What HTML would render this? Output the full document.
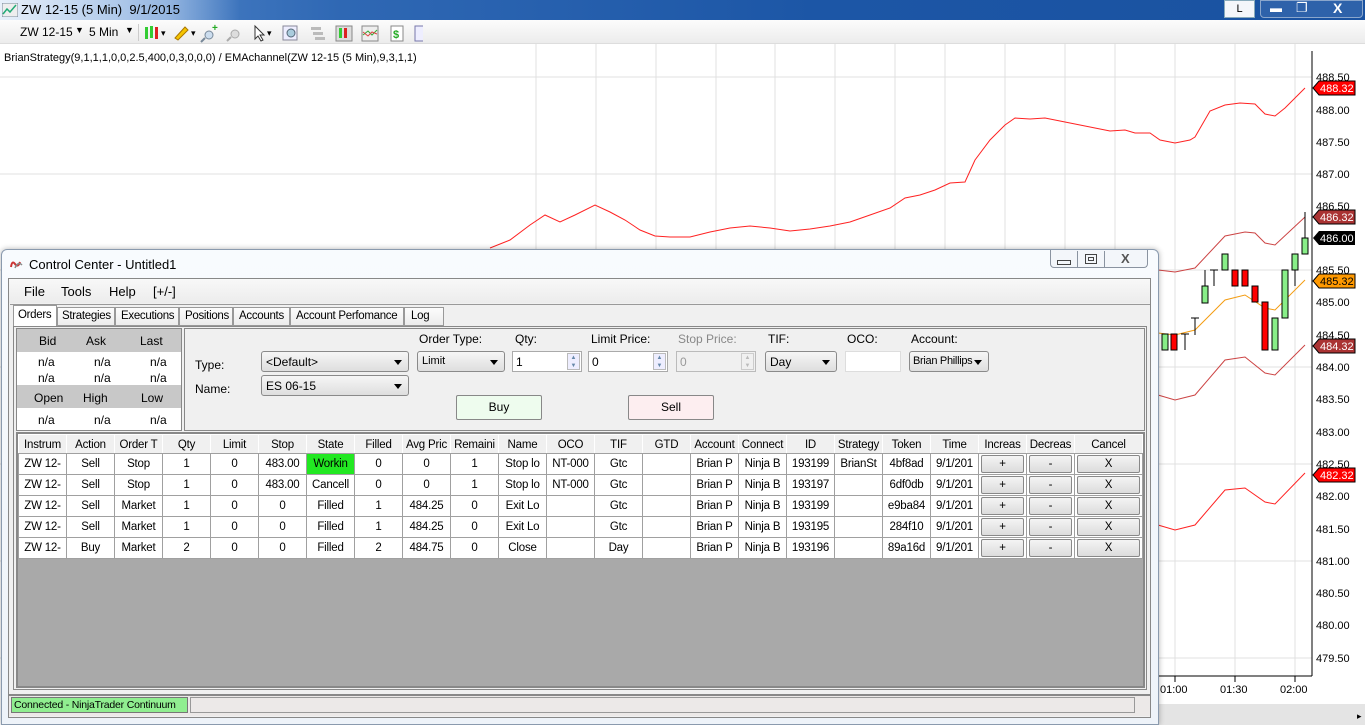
<!DOCTYPE html>
<html><head><meta charset="utf-8"><style>
*{margin:0;padding:0;box-sizing:border-box}
body{width:1365px;height:725px;overflow:hidden;background:#fff;font-family:"Liberation Sans",sans-serif;font-size:12px;color:#000;position:relative}
.abs{position:absolute}
.t{position:absolute;white-space:nowrap}
.tb{background:linear-gradient(#fcfcfc,#ececec)}
.btn{position:absolute;border:1px solid #888;border-radius:2px;background:linear-gradient(#f4f4f4,#dcdcdc)}
.dd{position:absolute;border:1px solid #8a8a8a;border-radius:3px;background:linear-gradient(#f6f6f6,#dedede);font-size:12px;padding:3px 4px;height:21px;white-space:nowrap}
.dd:after{content:"";position:absolute;right:6px;top:8px;border:4px solid transparent;border-top:5px solid #000}
.inp{position:absolute;border:1px solid #aaa;background:#fff;height:21px;font-size:12px;padding:3px 3px}
table{border-collapse:collapse;table-layout:fixed}
td{border:1px solid #a0a0a0;height:21px;text-align:center;font-size:11.5px;letter-spacing:-0.2px;overflow:hidden;white-space:nowrap;padding:0}
td .btn{position:relative;height:18px;margin:0 2px;line-height:16px}
.g td{border-color:#fff}
.tab{position:absolute;top:310px;font-size:11.5px;letter-spacing:-0.3px}
</style></head><body>
<div class="abs" style="left:0;top:0;width:1365px;height:20px;background:linear-gradient(90deg,#5b8fd0 0,#2f68b4 25%,#1c56a6 60%,#1a52a0)"></div>
<div class="abs" style="left:0;top:0;width:240px;height:20px;background:linear-gradient(90deg,#e8f0fa,rgba(200,220,245,.6) 70%,rgba(200,220,245,0))"></div>
<svg class="abs" style="left:2px;top:3px" width="16" height="14"><rect x="0" y="0" width="16" height="14" fill="#eee" stroke="#789"/><polyline points="1,11 5,6 8,9 14,2" fill="none" stroke="#2a7" stroke-width="1.5"/></svg>
<div class="t" style="left:21px;top:2px;font-size:13px">ZW 12-15 (5 Min)&nbsp; 9/1/2015</div>
<div class="abs" style="left:1224px;top:0;width:31px;height:18px;background:#f4f6fa;border:1px solid #8ab;text-align:center;font-size:11px;line-height:16px">L</div>
<div class="abs" style="left:1260px;top:0;width:103px;height:18px;border:1px solid #8aa6cc;border-radius:0 0 4px 4px;background:#2e62aa"></div>
<div class="t" style="left:1270px;top:1px;color:#fff;font-weight:bold">▬</div>
<div class="t" style="left:1296px;top:0;color:#fff;font-size:13px">❐</div>
<div class="t" style="left:1333px;top:0;color:#fff;font-weight:bold;font-size:14px">X</div>
<div class="abs tb" style="left:0;top:20px;width:1365px;height:24px;border-bottom:1px solid #ddd"></div>
<div class="t" style="left:20px;top:25px;font-size:12px">ZW 12-15</div>
<div class="t" style="left:75px;top:25px;font-size:9px">▼</div>
<div class="t" style="left:89px;top:25px;font-size:12px">5 Min</div>
<div class="t" style="left:125px;top:25px;font-size:9px">▼</div>
<div class="abs" style="left:138px;top:24px;width:1px;height:17px;background:#ccc"></div>
<svg class="abs" style="left:143px;top:23px" width="280" height="20">
<rect x="2" y="4" width="3" height="12" fill="#3c3"/><rect x="7" y="3" width="3" height="12" fill="#3c3"/><rect x="12" y="4" width="3" height="12" fill="#d22"/><text x="18" y="13" font-size="9">▾</text>
<path d="M32 15 L42 4 L45 7 L35 17 Z" fill="#f5c400" stroke="#a70"/><text x="48" y="13" font-size="9">▾</text>
<circle cx="66" cy="12" r="4" fill="#cde" stroke="#789"/><path d="M62 15 L58 19" stroke="#789" stroke-width="2"/><text x="69" y="8" font-size="10" fill="#2a2" font-weight="bold">+</text>
<circle cx="92" cy="11" r="4" fill="#ddd" stroke="#aaa"/><path d="M88 14 L84 18" stroke="#aaa" stroke-width="2"/>
<path d="M112 3 L112 16 L115 13 L118 18 L120 17 L117 12 L121 12 Z" fill="#fff" stroke="#333"/><text x="124" y="13" font-size="9">▾</text>
<rect x="140" y="3" width="14" height="14" fill="#eef" stroke="#889"/><circle cx="148" cy="10" r="4" fill="#acd" stroke="#567"/>
<rect x="168" y="4" width="10" height="3" fill="#bbb"/><rect x="170" y="9" width="10" height="3" fill="#bbb"/><rect x="172" y="14" width="10" height="3" fill="#bbb"/>
<rect x="193" y="3" width="16" height="15" fill="#ddd" stroke="#888"/><rect x="196" y="5" width="3" height="10" fill="#3c3"/><rect x="201" y="5" width="3" height="10" fill="#d22"/>
<rect x="219" y="3" width="16" height="15" fill="#eee" stroke="#888"/><polyline points="220,12 225,8 229,12 234,7" fill="none" stroke="#3a3"/><polyline points="220,9 225,13 229,9 234,11" fill="none" stroke="#d44"/>
<rect x="248" y="3" width="12" height="15" fill="#fff" stroke="#888"/><text x="250" y="15" font-size="11" fill="#2a2" font-weight="bold">$</text>
<rect x="272" y="3" width="12" height="15" fill="#eef" stroke="#77a"/>
</svg>
<div class="t" style="left:4px;top:52px;font-size:11px">BrianStrategy(9,1,1,1,0,0,2.5,400,0,3,0,0,0) / EMAchannel(ZW 12-15 (5 Min),9,3,1,1)</div>
<svg class="abs" style="left:0;top:44px" width="1365" height="681">
<g stroke="#e0e0e0" stroke-width="1">
<line x1="0" y1="33" x2="1312" y2="33"/><line x1="0" y1="130" x2="1312" y2="130"/><line x1="0" y1="226" x2="1312" y2="226"/><line x1="0" y1="323" x2="1312" y2="323"/><line x1="0" y1="420" x2="1312" y2="420"/><line x1="0" y1="517" x2="1312" y2="517"/><line x1="0" y1="614" x2="1312" y2="614"/>
<line x1="536" y1="0" x2="536" y2="632"/><line x1="596" y1="0" x2="596" y2="632"/><line x1="656" y1="0" x2="656" y2="632"/><line x1="716" y1="0" x2="716" y2="632"/><line x1="775" y1="0" x2="775" y2="632"/><line x1="835" y1="0" x2="835" y2="632"/><line x1="895" y1="0" x2="895" y2="632"/><line x1="945" y1="0" x2="945" y2="632"/><line x1="1005" y1="0" x2="1005" y2="632"/><line x1="1065" y1="0" x2="1065" y2="632"/><line x1="1115" y1="0" x2="1115" y2="632"/><line x1="1175" y1="0" x2="1175" y2="632"/><line x1="1235" y1="0" x2="1235" y2="632"/><line x1="1295" y1="0" x2="1295" y2="632"/>
</g>
<polyline fill="none" stroke="#f22" stroke-width="1" points="490,204 510,196 530,181 545,171 560,178 575,171 595,161 610,168 625,176 640,186 655,192 670,193 690,193 710,188 730,184 750,182 770,184 790,187 810,185 830,182 850,178 870,171 890,164 905,154 920,151 935,146 950,139 965,138 975,116 990,96 1005,81 1015,74 1030,75 1045,74 1060,77 1080,81 1095,84 1110,87 1125,86 1135,89 1150,89 1160,96 1175,99 1190,96 1195,93 1210,67 1225,61 1240,59 1255,60 1265,70 1275,72 1285,64 1305,44"/>
<polyline fill="none" stroke="#c44" points="1158,226 1175,228 1195,224 1225,192 1245,188 1255,189 1265,199 1275,201 1305,173"/>
<polyline fill="none" stroke="#f39c12" points="1158,289 1175,291 1195,286 1225,256 1245,251 1265,264 1275,266 1305,236"/>
<polyline fill="none" stroke="#c44" points="1158,351 1175,356 1195,351 1225,316 1245,313 1265,329 1275,331 1305,301"/>
<polyline fill="none" stroke="#f22" points="1158,481 1175,486 1195,481 1225,446 1245,444 1265,458 1275,460 1305,429"/>
<g stroke="#000" stroke-width="1">
<rect x="1162" y="290" width="6" height="16" fill="#8e8"/><rect x="1171" y="290" width="6" height="16" fill="#f00"/>
<line x1="1185" y1="290" x2="1185" y2="306"/><line x1="1181" y1="290" x2="1189" y2="290"/>
<line x1="1195" y1="274" x2="1195" y2="291"/><line x1="1191" y1="274" x2="1199" y2="274"/>
<rect x="1202" y="242" width="6" height="17" fill="#8e8"/><line x1="1205" y1="226" x2="1205" y2="242"/>
<line x1="1214" y1="226" x2="1214" y2="242"/><line x1="1210" y1="226" x2="1218" y2="226"/>
<rect x="1222" y="210" width="6" height="16" fill="#8e8"/>
<rect x="1232" y="226" width="6" height="16" fill="#f00"/><rect x="1242" y="226" width="6" height="16" fill="#f00"/>
<rect x="1252" y="242" width="6" height="16" fill="#f00"/><rect x="1262" y="258" width="6" height="48" fill="#f00"/>
<rect x="1272" y="274" width="6" height="32" fill="#8e8"/><rect x="1282" y="226" width="6" height="48" fill="#8e8"/>
<rect x="1292" y="210" width="6" height="16" fill="#8e8"/><line x1="1295" y1="226" x2="1295" y2="242"/>
<rect x="1302" y="194" width="6" height="16" fill="#8e8"/><line x1="1305" y1="168" x2="1305" y2="194"/>
</g>
<line x1="1312" y1="7" x2="1312" y2="632" stroke="#000"/>
<line x1="1158" y1="632" x2="1312" y2="632" stroke="#000"/>
<g stroke="#000"><line x1="1175" y1="632" x2="1175" y2="638"/><line x1="1235" y1="632" x2="1235" y2="638"/><line x1="1295" y1="632" x2="1295" y2="638"/></g>
<g font-size="11" font-family="Liberation Sans" fill="#000">
<text x="1316" y="37">488.50</text><text x="1316" y="70">488.00</text><text x="1316" y="102">487.50</text><text x="1316" y="134">487.00</text><text x="1316" y="166">486.50</text><text x="1316" y="230">485.50</text><text x="1316" y="262">485.00</text><text x="1316" y="295">484.50</text><text x="1316" y="327">484.00</text><text x="1316" y="359">483.50</text><text x="1316" y="392">483.00</text><text x="1316" y="424">482.50</text><text x="1316" y="456">482.00</text><text x="1316" y="489">481.50</text><text x="1316" y="521">481.00</text><text x="1316" y="553">480.50</text><text x="1316" y="585">480.00</text><text x="1316" y="618">479.50</text>
<text x="1160" y="649">01:00</text><text x="1220" y="649">01:30</text><text x="1280" y="649">02:00</text>
</g>
<g font-size="11" font-family="Liberation Sans">
<path d="M1313 44 L1319 37 L1355 37 L1355 51 L1319 51 Z" fill="#f00" stroke="#000"/><text x="1320" y="48" fill="#fff">488.32</text>
<path d="M1313 173 L1319 166 L1355 166 L1355 180 L1319 180 Z" fill="#a33" stroke="#000"/><text x="1320" y="177" fill="#fff">486.32</text>
<path d="M1313 194 L1319 187 L1355 187 L1355 201 L1319 201 Z" fill="#000"/><text x="1320" y="198" fill="#fff">486.00</text>
<path d="M1313 237 L1319 230 L1355 230 L1355 244 L1319 244 Z" fill="#f90" stroke="#000"/><text x="1320" y="241" fill="#000">485.32</text>
<path d="M1313 302 L1319 295 L1355 295 L1355 309 L1319 309 Z" fill="#a33" stroke="#000"/><text x="1320" y="306" fill="#fff">484.32</text>
<path d="M1313 431 L1319 424 L1355 424 L1355 438 L1319 438 Z" fill="#f00" stroke="#000"/><text x="1320" y="435" fill="#fff">482.32</text>
</g>
<rect x="1158" y="660" width="207" height="21" fill="#e4e4e4"/><text x="1357" y="675" font-size="9">▸</text>
</svg>
<div class="abs" style="left:1px;top:249px;width:1158px;height:476px;border:1px solid #8a9aae;border-radius:6px 6px 0 0;background:linear-gradient(#f8fbfe,#eef3f9);box-shadow:0 0 6px rgba(0,0,0,.3)"></div>
<svg class="abs" style="left:9px;top:258px" width="16" height="12"><path d="M2 9 Q3 2 6 6 T11 4" fill="none" stroke="#c33" stroke-width="2"/><path d="M6 10 Q9 3 13 7" fill="none" stroke="#888" stroke-width="1.5"/></svg>
<div class="t" style="left:29px;top:257px;font-size:13px">Control Center - Untitled1</div>
<div class="abs" style="left:1050px;top:250px;width:98px;height:18px;border:1px solid #8a93a0;border-top:none;border-radius:0 0 4px 4px;background:#f3f6fa"></div>
<div class="abs" style="left:1077px;top:251px;width:1px;height:16px;background:#8a93a0"></div>
<div class="abs" style="left:1104px;top:251px;width:1px;height:16px;background:#8a93a0"></div>
<div class="abs" style="left:1057px;top:260px;width:14px;height:5px;border:1px solid #444"></div>
<div class="abs" style="left:1085px;top:254px;width:12px;height:10px;border:1px solid #444"><div style="margin:2px;height:4px;border:1px solid #444"></div></div>
<div class="t" style="left:1121px;top:251px;font-size:13px;font-weight:bold;color:#555">X</div>
<div class="abs" style="left:8px;top:278px;width:1143px;height:440px;border:1px solid #888;background:#f0f0f0"></div>
<div class="abs" style="left:9px;top:279px;width:1141px;height:24px;background:linear-gradient(#f8f8f8,#ececec)"></div>
<div class="t" style="left:24px;top:284px;font-size:13px">File</div>
<div class="t" style="left:61px;top:284px;font-size:13px">Tools</div>
<div class="t" style="left:109px;top:284px;font-size:13px">Help</div>
<div class="t" style="left:153px;top:284px;font-size:13px">[+/-]</div>
<div class="abs" style="left:10px;top:304px;width:1140px;height:1px;background:#999"></div>
<div class="abs" style="left:13px;top:305px;width:44px;height:21px;background:#fff;border:1px solid #999;border-bottom:none"></div>
<div class="tab" style="left:18px;top:309px">Orders</div>
<div class="abs tb" style="left:57px;top:307px;width:58px;height:19px;border:1px solid #999"></div><div class="tab" style="left:62px">Strategies</div>
<div class="abs tb" style="left:115px;top:307px;width:64px;height:19px;border:1px solid #999"></div><div class="tab" style="left:121px">Executions</div>
<div class="abs tb" style="left:179px;top:307px;width:54px;height:19px;border:1px solid #999"></div><div class="tab" style="left:185px">Positions</div>
<div class="abs tb" style="left:233px;top:307px;width:57px;height:19px;border:1px solid #999"></div><div class="tab" style="left:239px">Accounts</div>
<div class="abs tb" style="left:290px;top:307px;width:114px;height:19px;border:1px solid #999"></div><div class="tab" style="left:296px">Account Perfomance</div>
<div class="abs tb" style="left:404px;top:307px;width:40px;height:19px;border:1px solid #999"></div><div class="tab" style="left:411px">Log</div>
<div class="abs" style="left:13px;top:326px;width:1134px;height:364px;border:1px solid #888;background:#f0f0f0"></div>
<div class="abs" style="left:16px;top:328px;width:166px;height:103px;border:1px solid #888;background:#fff"></div>
<div class="abs" style="left:17px;top:329px;width:164px;height:23px;background:#c8c8c8"></div>
<div class="abs" style="left:17px;top:385px;width:164px;height:23px;background:#c8c8c8"></div>
<div class="t" style="left:39px;top:334px">Bid</div><div class="t" style="left:86px;top:334px">Ask</div><div class="t" style="left:140px;top:334px">Last</div>
<div class="t" style="left:38px;top:355px">n/a</div><div class="t" style="left:94px;top:355px">n/a</div><div class="t" style="left:150px;top:355px">n/a</div>
<div class="t" style="left:38px;top:371px">n/a</div><div class="t" style="left:94px;top:371px">n/a</div><div class="t" style="left:150px;top:371px">n/a</div>
<div class="t" style="left:34px;top:391px">Open</div><div class="t" style="left:83px;top:391px">High</div><div class="t" style="left:141px;top:391px">Low</div>
<div class="t" style="left:38px;top:413px">n/a</div><div class="t" style="left:94px;top:413px">n/a</div><div class="t" style="left:150px;top:413px">n/a</div>
<div class="abs" style="left:184px;top:328px;width:961px;height:103px;border:1px solid #888;background:#f0f0f0"></div>
<div class="t" style="left:195px;top:358px">Type:</div><div class="t" style="left:195px;top:382px">Name:</div>
<div class="dd" style="left:261px;top:351px;width:148px">&lt;Default&gt;</div>
<div class="dd" style="left:261px;top:375px;width:148px">ES 06-15</div>
<div class="t" style="left:419px;top:332px">Order Type:</div>
<div class="t" style="left:515px;top:332px">Qty:</div>
<div class="t" style="left:591px;top:332px">Limit Price:</div>
<div class="t" style="left:678px;top:332px;color:#888">Stop Price:</div>
<div class="t" style="left:768px;top:332px">TIF:</div>
<div class="t" style="left:847px;top:332px">OCO:</div>
<div class="t" style="left:911px;top:332px">Account:</div>
<div class="dd" style="left:417px;top:351px;width:88px;font-size:11px">Limit</div>
<div class="inp" style="left:512px;top:351px;width:70px">1<span style="position:absolute;right:1px;top:1px;width:13px;height:17px;border:1px solid #bbb;background:#eef;font-size:6px;color:#68a;text-align:center;line-height:8px">▲<br>▼</span></div>
<div class="inp" style="left:588px;top:351px;width:80px">0<span style="position:absolute;right:1px;top:1px;width:13px;height:17px;border:1px solid #bbb;background:#eef;font-size:6px;color:#68a;text-align:center;line-height:8px">▲<br>▼</span></div>
<div class="inp" style="left:676px;top:351px;width:80px;background:#f0f0f0;color:#999;border-color:#bbb">0<span style="position:absolute;right:1px;top:1px;width:13px;height:17px;border:1px solid #ccc;font-size:6px;color:#bbb;text-align:center;line-height:8px">▲<br>▼</span></div>
<div class="dd" style="left:765px;top:351px;width:72px">Day</div>
<div class="inp" style="left:845px;top:351px;width:56px;border-color:#ddd"></div>
<div class="dd" style="left:909px;top:351px;width:80px;font-size:11px;letter-spacing:-0.3px;overflow:hidden;padding:3px 16px 3px 3px">Brian Phillips</div>
<div class="btn" style="left:456px;top:395px;width:86px;height:25px;background:#eefcee;text-align:center;line-height:23px">Buy</div>
<div class="btn" style="left:628px;top:395px;width:86px;height:25px;background:#fdeef0;text-align:center;line-height:23px">Sell</div>
<div class="abs" style="left:16px;top:432px;width:1129px;height:256px;border:2px solid #888;background:#a9a9a9"></div>
<table class="abs" style="left:18px;top:434px;width:1124px">
<colgroup><col span="20" style="width:48px"><col style="width:48px"><col style="width:48px"><col style="width:68px"></colgroup>
<tr class="g" style="background:#f0f0f0"><td>Instrum</td><td>Action</td><td>Order T</td><td>Qty</td><td>Limit</td><td>Stop</td><td>State</td><td>Filled</td><td>Avg Pric</td><td>Remaini</td><td>Name</td><td>OCO</td><td>TIF</td><td>GTD</td><td>Account</td><td>Connect</td><td>ID</td><td>Strategy</td><td>Token</td><td>Time</td><td>Increas</td><td>Decreas</td><td>Cancel</td></tr>
</table>
<table class="abs" style="left:18px;top:453px;width:1124px;background:#fff">
<colgroup><col span="20" style="width:48px"><col style="width:48px"><col style="width:48px"><col style="width:68px"></colgroup>
<tr><td>ZW 12-</td><td>Sell</td><td>Stop</td><td>1</td><td>0</td><td>483.00</td><td style="background:#22e822">Workin</td><td>0</td><td>0</td><td>1</td><td>Stop lo</td><td>NT-000</td><td>Gtc</td><td></td><td>Brian P</td><td>Ninja B</td><td>193199</td><td>BrianSt</td><td>4bf8ad</td><td>9/1/201</td><td><div class="btn">+</div></td><td><div class="btn">-</div></td><td><div class="btn">X</div></td></tr>
<tr><td>ZW 12-</td><td>Sell</td><td>Stop</td><td>1</td><td>0</td><td>483.00</td><td>Cancell</td><td>0</td><td>0</td><td>1</td><td>Stop lo</td><td>NT-000</td><td>Gtc</td><td></td><td>Brian P</td><td>Ninja B</td><td>193197</td><td></td><td>6df0db</td><td>9/1/201</td><td><div class="btn">+</div></td><td><div class="btn">-</div></td><td><div class="btn">X</div></td></tr>
<tr><td>ZW 12-</td><td>Sell</td><td>Market</td><td>1</td><td>0</td><td>0</td><td>Filled</td><td>1</td><td>484.25</td><td>0</td><td>Exit Lo</td><td></td><td>Gtc</td><td></td><td>Brian P</td><td>Ninja B</td><td>193199</td><td></td><td>e9ba84</td><td>9/1/201</td><td><div class="btn">+</div></td><td><div class="btn">-</div></td><td><div class="btn">X</div></td></tr>
<tr><td>ZW 12-</td><td>Sell</td><td>Market</td><td>1</td><td>0</td><td>0</td><td>Filled</td><td>1</td><td>484.25</td><td>0</td><td>Exit Lo</td><td></td><td>Gtc</td><td></td><td>Brian P</td><td>Ninja B</td><td>193195</td><td></td><td>284f10</td><td>9/1/201</td><td><div class="btn">+</div></td><td><div class="btn">-</div></td><td><div class="btn">X</div></td></tr>
<tr><td>ZW 12-</td><td>Buy</td><td>Market</td><td>2</td><td>0</td><td>0</td><td>Filled</td><td>2</td><td>484.75</td><td>0</td><td>Close</td><td></td><td>Day</td><td></td><td>Brian P</td><td>Ninja B</td><td>193196</td><td></td><td>89a16d</td><td>9/1/201</td><td><div class="btn">+</div></td><td><div class="btn">-</div></td><td><div class="btn">X</div></td></tr>
</table>
<div class="abs" style="left:9px;top:694px;width:1141px;height:22px;background:#ece9e8;border-top:2px solid #888"></div>
<div class="abs" style="left:11px;top:697px;width:177px;height:16px;background:#90ee90;border:1px solid #777"></div>
<div class="t" style="left:14px;top:699px;font-size:10.5px;letter-spacing:-0.2px">Connected - NinjaTrader Continuum</div>
<div class="abs" style="left:190px;top:697px;width:945px;height:16px;border:1px solid #999"></div>
</body></html>
